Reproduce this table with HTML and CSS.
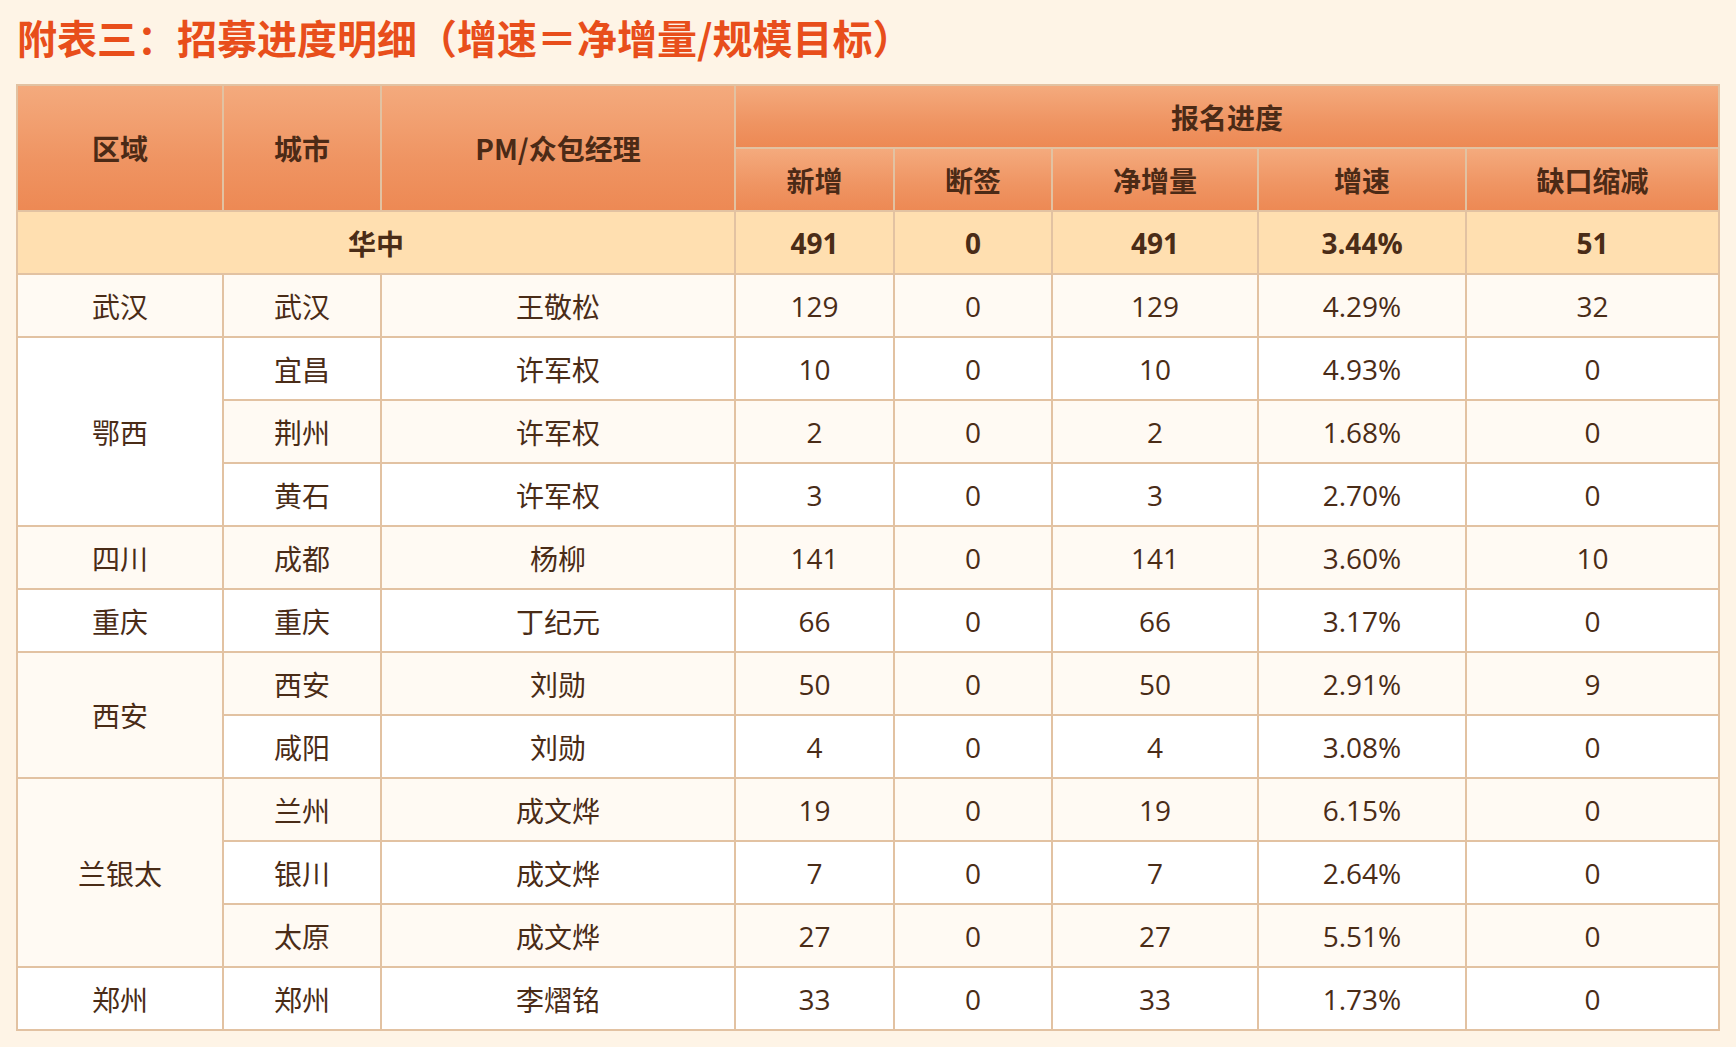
FILE: index.html
```html
<!DOCTYPE html>
<html lang="zh-CN">
<head>
<meta charset="utf-8">
<title>附表三：招募进度明细</title>
<link rel="stylesheet" href="styles.css">
</head>
<body>
<main class="page">
  <h1 class="title">附表三：招募进度明细（增速＝净增量/规模目标）</h1>
  <table class="grid">
    <colgroup>
      <col class="c-region">
      <col class="c-city">
      <col class="c-pm">
      <col class="c-new">
      <col class="c-break">
      <col class="c-net">
      <col class="c-rate">
      <col class="c-gap">
    </colgroup>
    <thead>
      <tr>
        <th rowspan="2">区域</th>
        <th rowspan="2">城市</th>
        <th rowspan="2">PM/众包经理</th>
        <th colspan="5">报名进度</th>
      </tr>
      <tr>
        <th>新增</th>
        <th>断签</th>
        <th>净增量</th>
        <th>增速</th>
        <th>缺口缩减</th>
      </tr>
    </thead>
    <tbody>
      <tr class="total">
        <td colspan="3">华中</td>
        <td>491</td><td>0</td><td>491</td><td>3.44%</td><td>51</td>
      </tr>
      <tr class="cream">
        <td>武汉</td><td>武汉</td><td>王敬松</td>
        <td>129</td><td>0</td><td>129</td><td>4.29%</td><td>32</td>
      </tr>
      <tr class="white">
        <td rowspan="3">鄂西</td><td>宜昌</td><td>许军权</td>
        <td>10</td><td>0</td><td>10</td><td>4.93%</td><td>0</td>
      </tr>
      <tr class="cream">
        <td>荆州</td><td>许军权</td>
        <td>2</td><td>0</td><td>2</td><td>1.68%</td><td>0</td>
      </tr>
      <tr class="white">
        <td>黄石</td><td>许军权</td>
        <td>3</td><td>0</td><td>3</td><td>2.70%</td><td>0</td>
      </tr>
      <tr class="cream">
        <td>四川</td><td>成都</td><td>杨柳</td>
        <td>141</td><td>0</td><td>141</td><td>3.60%</td><td>10</td>
      </tr>
      <tr class="white">
        <td>重庆</td><td>重庆</td><td>丁纪元</td>
        <td>66</td><td>0</td><td>66</td><td>3.17%</td><td>0</td>
      </tr>
      <tr class="cream">
        <td rowspan="2">西安</td><td>西安</td><td>刘勋</td>
        <td>50</td><td>0</td><td>50</td><td>2.91%</td><td>9</td>
      </tr>
      <tr class="white">
        <td>咸阳</td><td>刘勋</td>
        <td>4</td><td>0</td><td>4</td><td>3.08%</td><td>0</td>
      </tr>
      <tr class="cream">
        <td rowspan="3">兰银太</td><td>兰州</td><td>成文烨</td>
        <td>19</td><td>0</td><td>19</td><td>6.15%</td><td>0</td>
      </tr>
      <tr class="white">
        <td>银川</td><td>成文烨</td>
        <td>7</td><td>0</td><td>7</td><td>2.64%</td><td>0</td>
      </tr>
      <tr class="cream">
        <td>太原</td><td>成文烨</td>
        <td>27</td><td>0</td><td>27</td><td>5.51%</td><td>0</td>
      </tr>
      <tr class="white">
        <td>郑州</td><td>郑州</td><td>李熠铭</td>
        <td>33</td><td>0</td><td>33</td><td>1.73%</td><td>0</td>
      </tr>
    </tbody>
  </table>
</main>
</body>
</html>
```

FILE: styles.css
```css
html, body {
  margin: 0;
  padding: 0;
  background: #fef4e6;
}

.page {
  padding: 8px 16px 0 16px;
  font-family: "Open Sans", "Noto Sans CJK SC", sans-serif;
  color: #4a2c17;
}

.title {
  margin: 0 0 18px 0;
  padding-left: 1px;
  font-family: "Noto Sans CJK SC", sans-serif;
  font-size: 40px;
  line-height: 58px;
  font-weight: 700;
  color: #e84e1b;
  white-space: nowrap;
}

.grid {
  border-collapse: collapse;
  table-layout: fixed;
  width: 1702px;
  border: 2px solid #e2c2a2;
}

.c-region { width: 206px; }
.c-city { width: 158px; }
.c-pm { width: 354px; }
.c-new { width: 159px; }
.c-break { width: 158px; }
.c-net { width: 206px; }
.c-rate { width: 208px; }
.c-gap { width: 253px; }

.grid th,
.grid td {
  border: 2px solid #e2c2a2;
  padding: 0;
  text-align: center;
  vertical-align: middle;
  font-size: 28px;
}

.grid tr {
  height: 63px;
}

.grid th {
  font-family: "Noto Sans CJK SC", sans-serif;
  font-weight: 700;
  color: #4b2a16;
  background: linear-gradient(to bottom, #f4aa7d 0%, #ef9462 60%, #ed8954 100%);
}

.grid td {
  font-weight: 400;
}

.total td {
  background: #ffdfb0;
  font-weight: 700;
}

.cream td {
  background: #fffaf3;
}

.white td {
  background: #ffffff;
}
```
